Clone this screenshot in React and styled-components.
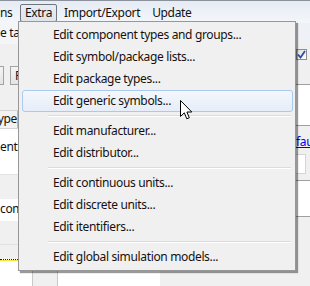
import React from "react";
import styled, { createGlobalStyle } from "styled-components";

const GlobalStyle = createGlobalStyle`
    html, body {
        margin: 0;
        padding: 0;
        background: #f0f0f0;
    }
    body {
        font-family: "Noto Sans", "Open Sans", sans-serif;
        font-size: 12px;
        letter-spacing: -0.35px;
        color: #111;
    }
`;

const menuGroups = [
    ["Edit component types and groups...", "Edit symbol/package lists...", "Edit package types...", "Edit generic symbols..."],
    ["Edit manufacturer...", "Edit distributor..."],
    ["Edit continuous units...", "Edit discrete units...", "Edit itentifiers..."],
    ["Edit global simulation models..."],
];

const App = () => {
    return (
        <Window>
            <GlobalStyle />
            <MenuBar>
                <BarItem $cut>ns</BarItem>
                <BarItem $open>Extra</BarItem>
                <BarItem>Import/Export</BarItem>
                <BarItem>Update</BarItem>
            </MenuBar>
            <Body>
                <LeftPane>
                    <Caption>e table:</Caption>
                    <Gap $h={22} />
                    <Tabs>
                        <TabButton $w={4} />
                        <TabButton>Parts</TabButton>
                    </Tabs>
                    <Gap $h={25} />
                    <GridHeader>
                        <HeadCell>type</HeadCell>
                        <HeadCell>name</HeadCell>
                    </GridHeader>
                    <GridBody>
                        <GridCell>ent</GridCell>
                    </GridBody>
                    <Gap $h={24} />
                    <Field>com</Field>
                    <Gap $h={24} $line />
                    <Gap $h={14} />
                    <DottedArea>
                        <ScrollStub />
                    </DottedArea>
                </LeftPane>
                <RightPane>
                    <TopStrip />
                    <CheckRow>
                        <CheckBox>
                            <svg width="9" height="9" viewBox="0 0 9 9">
                                <path d="M1 4.5 L3.5 7.5 L8 1" fill="none" stroke="#2a4fa8" strokeWidth="1.8" />
                            </svg>
                        </CheckBox>
                        <span>Is</span>
                    </CheckRow>
                    <WhitePanel $h={41} />
                    <LinkPanel>
                        <LinkText>fault</LinkText>
                        <SmallInput />
                    </LinkPanel>
                    <WhitePanel $h={36} />
                    <Gap $h={70} />
                </RightPane>
            </Body>

            <Dropdown>
                {menuGroups.map((group, gi) => (
                    <React.Fragment key={gi}>
                        {gi > 0 && <Separator />}
                        {group.map((label) => (
                            <DropItem key={label} $hover={label === "Edit generic symbols..."}>
                                {label}
                            </DropItem>
                        ))}
                    </React.Fragment>
                ))}
            </Dropdown>

            <Cursor width="13" height="21" viewBox="0 0 13 21">
                <path
                    d="M0.5 0.5 L0.5 16.5 L4.3 12.8 L6.8 18.8 L9.3 17.8 L6.9 12 L11.8 12 Z"
                    fill="#fff"
                    stroke="#000"
                    strokeWidth="1"
                    strokeLinejoin="miter"
                />
            </Cursor>
        </Window>
    );
};

const Window = styled.div`
    position: relative;
    width: 310px;
    height: 286px;
    overflow: hidden;
    background: #f0f0f0;
`;
const MenuBar = styled.div`
    height: 21px;
    border-top: 1px solid #8c929c;
    background: linear-gradient(#e6ecf4, #eef2f8 60%, #f3f6fa);
    display: flex;
    align-items: center;
    padding-top: 1px;
    box-sizing: content-box;
`;
const BarItem = styled.div`
    height: 18px;
    line-height: 16px;
    padding: 0 4px;
    margin-right: 2px;
    box-sizing: border-box;
    border: 1px solid ${(p) => (p.$open ? "#6f7680" : "transparent")};
    border-radius: 2px;
    background: ${(p) => (p.$open ? "linear-gradient(#e9edf2, #dfe5ec)" : "none")};
    ${(p) => p.$cut && "margin-left: -5px; width: 23px;"}
    white-space: nowrap;
`;
const Body = styled.div`
    display: flex;
    justify-content: space-between;
`;
const LeftPane = styled.div`
    width: 160px;
    display: flex;
    flex-direction: column;
`;
const RightPane = styled.div`
    width: 14px;
    display: flex;
    flex-direction: column;
    overflow: hidden;
`;
const Caption = styled.div`
    height: 21px;
    line-height: 20px;
    background: #f4f5f7;
    white-space: nowrap;
`;
const Gap = styled.div`
    height: ${(p) => p.$h}px;
    box-sizing: border-box;
    border-bottom: ${(p) => (p.$line ? "1px solid #e2e2e2" : "none")};
`;
const Tabs = styled.div`
    height: 19px;
    display: flex;
    gap: 6px;
`;
const TabButton = styled.div`
    ${(p) => (p.$w ? `width: ${p.$w}px;` : "padding: 0 4px;")}
    height: 19px;
    line-height: 17px;
    box-sizing: border-box;
    border: 1px solid #a3a3a3;
    ${(p) => p.$w && "border-left: none;"}
    background: linear-gradient(#f4f4f4, #e4e4e4);
`;
const GridHeader = styled.div`
    height: 17px;
    display: flex;
    border-top: 1px solid #d5d5d5;
    border-bottom: 1px solid #d5d5d5;
    background: #f3f3f3;
`;
const HeadCell = styled.div`
    width: 17px;
    line-height: 16px;
    border-right: 1px solid #b8b8b8;
    overflow: hidden;
    white-space: nowrap;
    direction: rtl;
    &:last-child {
        width: auto;
        flex: 1;
        direction: ltr;
        padding-left: 4px;
    }
`;
const GridBody = styled.div`
    height: 46px;
    background: #fff;
    border-bottom: 1px solid #e4e4e4;
    box-sizing: border-box;
    padding-top: 9px;
`;
const GridCell = styled.div`
    line-height: 17px;
    white-space: nowrap;
`;
const Field = styled.div`
    height: 22px;
    line-height: 20px;
    background: #fff;
    white-space: nowrap;
`;
const DottedArea = styled.div`
    height: 30px;
    background: #fff;
    border-top: 1px dotted #222;
    box-shadow: inset 0 1px 0 #f6e63a;
    position: relative;
`;
const ScrollStub = styled.div`
    position: absolute;
    left: 32px;
    top: 11px;
    width: 24px;
    height: 20px;
    border-left: 1px solid #c8c8c8;
    border-right: 1px solid #c8c8c8;
    background: #f0f0f0;
`;
const TopStrip = styled.div`
    height: 21px;
    background: #eef1f5;
`;
const CheckRow = styled.div`
    height: 41px;
    display: flex;
    align-items: flex-start;
    gap: 3px;
    padding-top: 3px;
    box-sizing: border-box;
    border-bottom: 1px solid #a0a0a0;
    white-space: nowrap;
`;
const CheckBox = styled.div`
    width: 11px;
    height: 11px;
    flex: none;
    box-sizing: border-box;
    border: 1px solid #8e8f8f;
    background: linear-gradient(135deg, #dcdcdc, #fff);
    display: flex;
    align-items: center;
    justify-content: center;
    margin-top: 2px;
`;
const WhitePanel = styled.div`
    height: ${(p) => p.$h}px;
    background: #fff;
    box-sizing: border-box;
    border-bottom: 1px solid #a0a0a0;
`;
const LinkPanel = styled.div`
    height: 55px;
    box-sizing: border-box;
    padding-top: 8px;
    border-bottom: 1px solid #a0a0a0;
`;
const LinkText = styled.div`
    color: #0000ee;
    text-decoration: underline;
    line-height: 16px;
    white-space: nowrap;
`;
const SmallInput = styled.div`
    margin-top: 4px;
    width: 10px;
    height: 20px;
    box-sizing: border-box;
    border: 1px solid #d6d6d6;
    border-left: none;
    background: #fff;
`;
const Dropdown = styled.div`
    position: absolute;
    left: 18px;
    top: 21px;
    width: 278px;
    height: 250px;
    box-sizing: border-box;
    padding: 2px 2px 2px 3px;
    background: #f0f0f0;
    border: 1px solid #979797;
    box-shadow: 2px 2px 1px rgba(0, 0, 0, 0.4);
`;
const DropItem = styled.div`
    height: 22px;
    line-height: 20px;
    box-sizing: border-box;
    padding-left: 30px;
    border: 1px solid ${(p) => (p.$hover ? "#a9c9ef" : "transparent")};
    border-radius: 3px;
    background: ${(p) => (p.$hover ? "linear-gradient(#f4f7fc, #e6edf8)" : "none")};
    color: #161010;
    white-space: nowrap;
`;
const Separator = styled.div`
    height: 8px;
    margin: 0 2px 0 26px;
    display: flex;
    flex-direction: column;
    justify-content: center;
    &::before {
        content: "";
        height: 1px;
        background: #dcdcdc;
    }
    &::after {
        content: "";
        height: 1px;
        background: #fff;
    }
`;
const Cursor = styled.svg`
    position: absolute;
    left: 180px;
    top: 100px;
`;

export default App;
